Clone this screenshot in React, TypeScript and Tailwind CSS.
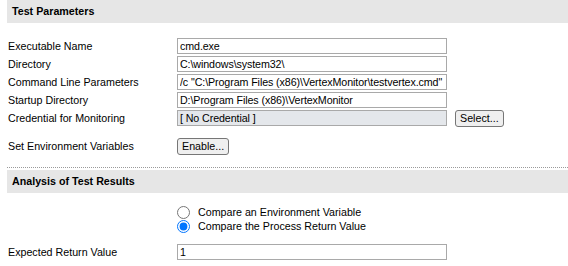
import React, { useState } from 'react';

const Field = ({ label, value, gray }: { label: string; value: string; gray?: boolean }) => (
  <div className="flex items-center h-[18px]">
    <div className="w-[170px] pl-[1px]">{label}</div>
    <input
      readOnly
      value={value}
      className={`w-[270px] h-[16px] border border-[#a9a9a9] px-[2px] text-[10.7px] tracking-[-0.1px] text-black outline-none ${gray ? 'bg-[#e4e7eb]' : 'bg-white'}`}
    />
  </div>
);

const Btn = ({ children }: { children: React.ReactNode }) => (
  <button className="h-[17px] px-[4px] text-[10.7px] leading-none border border-[#767676] rounded-[3px] bg-[#efefef] text-black">
    {children}
  </button>
);

const SectionHeader = ({ title }: { title: string }) => (
  <div className="h-[23px] bg-[#e6e6e6] flex items-center pl-[5px] font-bold">{title}</div>
);

export default function App() {
  const [mode, setMode] = useState('return');

  return (
    <div className="w-[568px] h-[266px] bg-white pl-[7px] text-[10.7px] text-black overflow-hidden" style={{ fontFamily: '"Liberation Sans", Arial, sans-serif' }}>
      <SectionHeader title="Test Parameters" />

      <div className="pt-[14px]">
        <Field label="Executable Name" value="cmd.exe" />
        <Field label="Directory" value="C:\windows\system32\" />
        <Field label="Command Line Parameters" value={'/c "C:\\Program Files (x86)\\VertexMonitor\\testvertex.cmd"'} />
        <Field label="Startup Directory" value="D:\Program Files (x86)\VertexMonitor" />
        <div className="flex items-center h-[18px]">
          <div className="w-[170px] pl-[1px]">Credential for Monitoring</div>
          <input
            readOnly
            value="[ No Credential ]"
            className="w-[270px] h-[16px] border border-[#a9a9a9] px-[2px] text-[10.7px] tracking-[-0.1px] bg-[#e4e7eb] outline-none"
          />
          <div className="ml-[8px]">
            <Btn>Select...</Btn>
          </div>
        </div>
      </div>

      <div className="flex items-center mt-[10px] h-[19px]">
        <div className="w-[170px] pl-[1px]">Set Environment Variables</div>
        <Btn>Enable...</Btn>
      </div>

      <div className="mt-[11px] border-t border-dotted border-[#9a9a9a]" />
      <div className="mt-[2px]">
        <SectionHeader title="Analysis of Test Results" />
      </div>

      <div className="pl-[170px] pt-[12px] flex flex-col">
        <label className="flex items-center h-[14px]">
          <input
            type="radio"
            name="mode"
            checked={mode === 'env'}
            onChange={() => setMode('env')}
            className="m-0 w-[13px] h-[13px] accent-[#0075ff]"
          />
          <span className="ml-[8px]">Compare an Environment Variable</span>
        </label>
        <label className="flex items-center h-[14px]">
          <input
            type="radio"
            name="mode"
            checked={mode === 'return'}
            onChange={() => setMode('return')}
            className="m-0 w-[13px] h-[13px] accent-[#0075ff]"
          />
          <span className="ml-[8px]">Compare the Process Return Value</span>
        </label>
      </div>

      <div className="mt-[10px]">
        <Field label="Expected Return Value" value="1" />
      </div>
    </div>
  );
}
